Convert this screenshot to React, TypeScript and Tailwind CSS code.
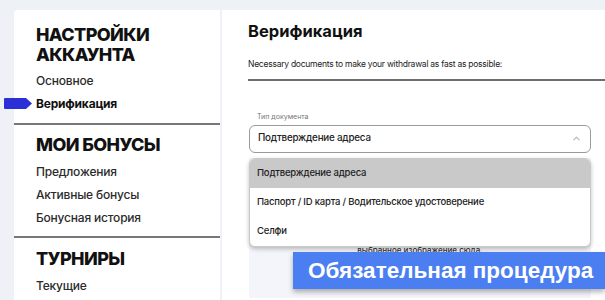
import { ChevronUp } from "lucide-react";

const font = { fontFamily: "Inter, 'Noto Sans', sans-serif" };

function Heading({ children }: { children: React.ReactNode }) {
    return <h3 className="text-[18px] leading-[20px] font-extrabold uppercase text-[#111] tracking-[-0.6px]">{children}</h3>;
}

function Item({ label, active }: { label: string; active?: boolean }) {
    return (
        <div className={`relative leading-[23px] text-[12px] tracking-[-0.2px] ${active ? "font-bold text-[#111]" : "font-medium text-[#2a2a2a]"}`}>
            {active && (
                <svg className="absolute left-[-32px] top-[6px]" width="28" height="11" viewBox="0 0 28 11">
                    <path d="M1 0 H22 L28 5.5 L22 11 H1 Q0 11 0 10 V1 Q0 0 1 0 Z" fill="#2b2fd6" />
                </svg>
            )}
            {label}
        </div>
    );
}

export default function App() {
    const options = ["Подтверждение адреса", "Паспорт / ID карта / Водительское удостоверение", "Селфи"];

    return (
        <div className="relative w-[605px] h-[300px] overflow-hidden bg-[#eef1f6] flex gap-[2px] pt-[10px] pl-[14px]" style={font}>
            <aside className="w-[206px] shrink-0 bg-white rounded-tl-[4px] pt-[15px]">
                <div className="pl-[22px]">
                    <Heading>Настройки<br />аккаунта</Heading>
                    <div className="mt-[4px]">
                        <Item label="Основное" />
                        <Item label="Верификация" active />
                    </div>
                </div>
                <div className="mt-[8px] h-[2px] bg-[#777]" />
                <div className="pl-[22px] pt-[10px]">
                    <Heading>Мои бонусы</Heading>
                    <div className="mt-[5px]">
                        <Item label="Предложения" />
                        <Item label="Активные бонусы" />
                        <Item label="Бонусная история" />
                    </div>
                </div>
                <div className="mt-[7px] h-[2px] bg-[#777]" />
                <div className="pl-[22px] pt-[11px]">
                    <Heading>Турниры</Heading>
                    <div className="mt-[5px]">
                        <Item label="Текущие" />
                    </div>
                </div>
            </aside>

            <main className="flex-1 bg-white pt-[11px] pl-[26px] pr-[14px]">
                <h2 className="text-[16.5px] leading-[20px] font-bold text-[#111]">Верификация</h2>
                <p className="mt-[17px] text-[8.5px] leading-[12px] tracking-[-0.25px] text-[#222]">
                    Necessary documents to make your withdrawal as fast as possible:
                </p>
                <div className="mt-[9px] -mr-[14px] h-[1.5px] bg-[#6e6e6e]" />

                <div className="relative mt-[31px] pl-[1px]">
                    <div className="pl-[8px] text-[7px] leading-[10px] text-[#777]">Тип документа</div>
                    <div className="mt-[3px] h-[28px] border border-[#9a9a9a] rounded-[6px] flex items-center justify-between px-[8px]">
                        <span className="text-[9.8px] tracking-[-0.2px] text-[#222] font-medium">Подтверждение адреса</span>
                        <ChevronUp size={11} strokeWidth={2.5} className="text-[#b5b5b5]" />
                    </div>

                    <div className="mt-[5px] h-[140px] bg-[#f3f5fa] pt-[86px] text-center text-[8px] font-medium text-[#333]">
                        выбранное изображение сюда.
                    </div>

                    <div className="absolute left-[1px] right-0 top-[46px] bg-white border border-[#c9c9c9] rounded-[6px] overflow-hidden shadow-[0_2px_4px_rgba(0,0,0,0.25)]">
                        {options.map((o, i) => (
                            <div key={o} className={`h-[29px] flex items-center px-[7px] text-[9.5px] tracking-[-0.2px] text-[#222] font-medium ${i === 0 ? "bg-[#c9c9c9]" : ""}`}>
                                {o}
                            </div>
                        ))}
                    </div>
                </div>
            </main>

            <div
                className="absolute left-[293px] top-[252px] w-[312px] h-[37px] bg-[#4b7ef0] flex items-center pl-[15px] text-white text-[22.5px] font-bold shadow-[0_3px_5px_rgba(0,0,0,0.3)]"
                style={{ fontFamily: "'Liberation Sans', Arial, sans-serif" }}
            >
                Обязательная процедура
            </div>
        </div>
    );
}
